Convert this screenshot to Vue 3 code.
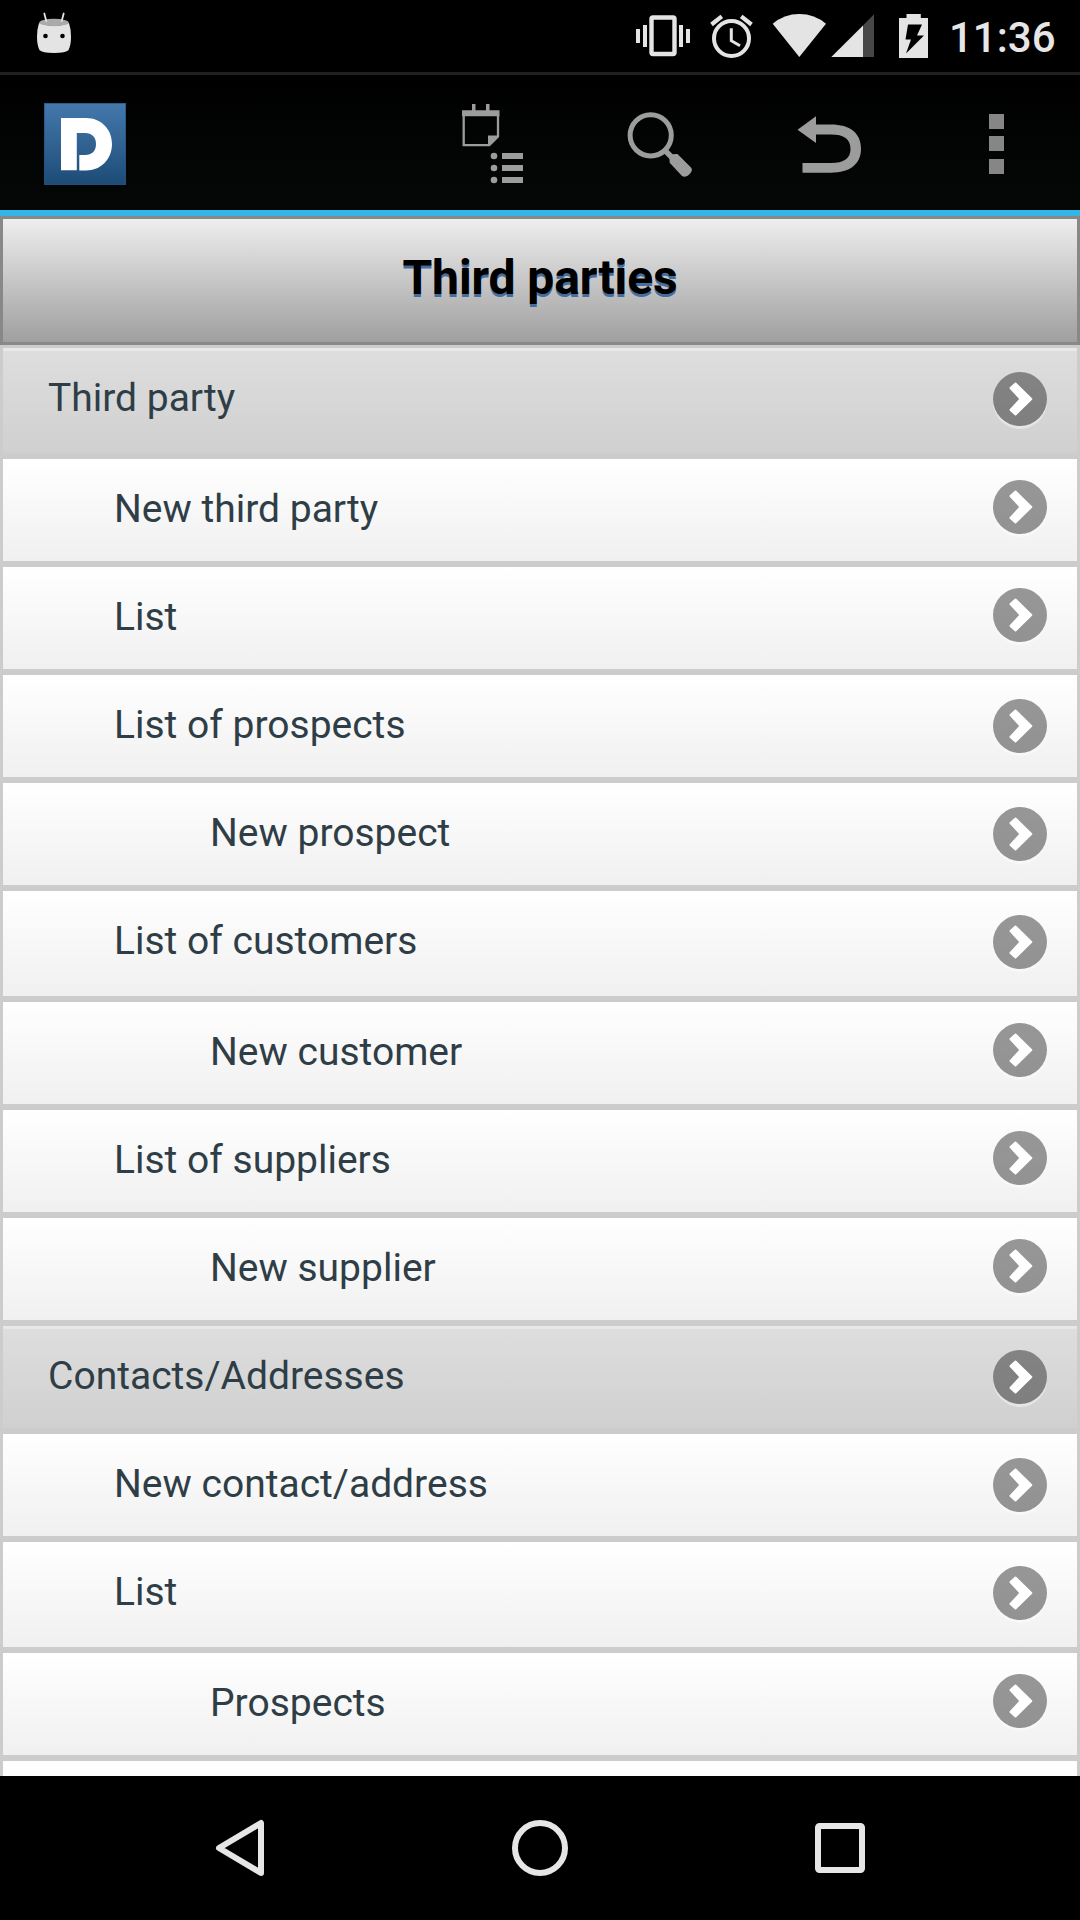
<script setup>
const rows = [
  { label: 'Third party', level: 0, height: 105, icon: 24 },
  { label: 'New third party', level: 1, height: 102, icon: 21 },
  { label: 'List', level: 1, height: 102, icon: 21 },
  { label: 'List of prospects', level: 1, height: 102, icon: 24 },
  { label: 'New prospect', level: 2, height: 102, icon: 24 },
  { label: 'List of customers', level: 1, height: 105, icon: 24 },
  { label: 'New customer', level: 2, height: 102, icon: 21 },
  { label: 'List of suppliers', level: 1, height: 102, icon: 21 },
  { label: 'New supplier', level: 2, height: 102, icon: 21 },
  { label: 'Contacts/Addresses', level: 0, height: 102, icon: 24 },
  { label: 'New contact/address', level: 1, height: 102, icon: 24 },
  { label: 'List', level: 1, height: 105, icon: 24 },
  { label: 'Prospects', level: 2, height: 102, icon: 21 },
  { label: '', level: 1, height: 102, icon: 24 },
]
</script>

<template>
  <div class="screen">
    <header class="status">
      <svg class="robot" width="36" height="42" viewBox="36 12 36 42">
        <path d="M39 23Q54 29 69 23Q71 29 71 37Q71 45 68.600 50Q66 53 54 53Q42 53 39.400 50Q37 45 37 37Q37 29 39 23Z" fill="#e4e4e4" />
        <ellipse cx="54" cy="22.500" rx="14.800" ry="3.700" fill="#aaa" />
        <path d="M44.300 13.500L46.300 21M63.700 13.500L61.700 21" stroke="#e4e4e4" stroke-width="1.800" stroke-linecap="round" />
        <circle cx="45.500" cy="36" r="2.300" fill="#000" />
        <circle cx="62.500" cy="36" r="2.300" fill="#000" />
      </svg>
      <svg class="status-icons" width="300" height="60" viewBox="630 0 300 60">
        <g fill="#e4e4e4">
          <path d="M636 29h4v14h-4zM643 25h4v22h-4zM679 25h4v22h-4zM686 29h4v14h-4z" />
          <rect x="651.500" y="17.500" width="23" height="36.500" rx="1.500" fill="none" stroke="#e4e4e4" stroke-width="4.400" />
          <circle cx="731.500" cy="38.500" r="17.500" fill="none" stroke="#e4e4e4" stroke-width="4" />
          <path d="M731.300 28.200v12.500l8.700 5" fill="none" stroke="#e4e4e4" stroke-width="3" />
          <path d="M711.500 24.500l10.300-8.200M751.500 24.500l-10.300-8.200" stroke="#e4e4e4" stroke-width="4.200" />
          <path d="M772.700 23.800Q784 14 799.300 14T826 23.800L799.300 57Z" />
          <path d="M831.300 57L863 25.500V57Z" />
          <path d="M863 25.500L874 14.300V57H863Z" fill="#474747" />
          <path d="M906.500 14h14.300v4H928v40h-29V18h7.500Z" />
        </g>
        <path d="M908 24.500H922L917 35.500H924L906 53.500L911 39.500H905.500Z" fill="#000" />
      </svg>
      <span class="clock">11:36</span>
    </header>

    <nav class="actionbar">
      <svg class="logo" width="82" height="82" viewBox="44 103 82 82">
        <defs>
          <linearGradient id="logoFill" x1="0" y1="0" x2="0" y2="1">
            <stop offset="0" stop-color="#4479ad" />
            <stop offset="1" stop-color="#1d4b76" />
          </linearGradient>
        </defs>
        <rect x="44" y="103" width="82" height="82" fill="url(#logoFill)" />
        <rect x="44.500" y="103.500" width="81" height="81" fill="none" stroke="#235081" stroke-opacity=".7" />
        <path d="M61 118H86C101 118 112 129 112 144C112 159 101 170.500 86 170.500H79.300V155H85C92 155 96 151 96 144C96 137 92 133 85 133H76.800V170.200H61Z" fill="#fff" />
      </svg>
      <div class="actions">
        <svg width="68" height="86" viewBox="460 100 68 86">
          <g fill="#9c9c9c">
            <path d="M472 104h3.500v7h-3.500zM486 104h3.500v7H486zM462 110.300h37.500v6H462z" />
            <path d="M463.700 115v30.200h25.600l8.700-8.700V115" fill="none" stroke="#9c9c9c" stroke-width="2.300" />
            <path d="M488 146v-10.500h11L489 146z" />
            <circle cx="494" cy="156" r="3.300" /><circle cx="494" cy="168" r="3.300" /><circle cx="494" cy="180" r="3.300" />
            <path d="M502 153h21v6h-21zM502 165h21v6h-21zM502 177h21v6h-21z" />
          </g>
        </svg>
        <svg width="70" height="70" viewBox="625 110 70 70">
          <circle cx="650.700" cy="135.300" r="20.600" fill="none" stroke="#9c9c9c" stroke-width="5" />
          <path d="M664 149.500l8 8" stroke="#9c9c9c" stroke-width="5.500" />
          <path d="M669.500 158.500Q669 155.500 671.500 155Q673 153.600 677.500 154L691 167.500Q693 170 690.500 173Q688 176.500 684 176.700L682 176L669.700 162.800Z" fill="#9c9c9c" />
        </svg>
        <svg width="68" height="62" viewBox="796 114 68 62">
          <path d="M797.500 129.800L816 116.300V124.600H831C850 124.600 861 133 861 149C861 164 850 172.700 831 172.700H802.500V163H831C844 163 850.500 158.500 850.500 149C850.500 139 844 134.600 831 134.600H816V143Z" fill="#9c9c9c" />
        </svg>
        <svg width="15" height="60" viewBox="0 0 15 60">
          <path d="M0 0h15v15H0zM0 22h15v15H0zM0 45h15v15H0z" fill="#868686" />
        </svg>
      </div>
    </nav>

    <main class="content">
      <h1 class="title">Third parties</h1>
      <ul class="list">
        <li
          v-for="(row, i) in rows"
          :key="i"
          class="row"
          :class="'level-' + row.level"
          :style="{ height: row.height + 'px' }"
        >
          <span class="label">{{ row.label }}</span>
          <span class="arrow" :style="{ marginTop: row.icon + 'px' }">
            <svg width="54" height="54" viewBox="-27 -27 54 54">
              <path d="M-4.500 -15.500L11.300 0L-4.500 15.500L-9.500 11L0.500 0L-9.500 -11Z" fill="#fff" stroke="#fff" stroke-width="2" stroke-linejoin="round" />
            </svg>
          </span>
        </li>
      </ul>
    </main>

    <footer class="navbar">
      <svg width="52" height="66" viewBox="214 1815 52 66">
        <path d="M261 1823V1873L219 1848Z" fill="none" stroke="#e6e6e6" stroke-width="6" stroke-linejoin="round" />
      </svg>
      <svg width="58" height="58" viewBox="0 0 58 58">
        <circle cx="29" cy="29" r="25" fill="none" stroke="#e6e6e6" stroke-width="6" />
      </svg>
      <svg width="50" height="50" viewBox="0 0 50 50">
        <rect x="3" y="3" width="44" height="44" rx="1.500" fill="none" stroke="#e6e6e6" stroke-width="6" />
      </svg>
    </footer>
  </div>
</template>

<style>
body {
  margin: 0;
  background: #000;
}
</style>

<style scoped>
.screen {
  width: 1080px;
  height: 1920px;
  display: flex;
  flex-direction: column;
  overflow: hidden;
  background: #000;
  font-family: Roboto, "Liberation Sans", sans-serif;
}
svg {
  display: block;
  flex: none;
}
.status {
  height: 72px;
  flex: none;
  display: flex;
  align-items: flex-start;
  border-bottom: 3px solid #202020;
}
.robot {
  margin: 12px 0 0 36px;
}
.status-icons {
  margin-left: 558px;
}
.clock {
  margin-left: 19px;
  color: #e6e6e6;
  font-size: 42px;
  font-weight: 500;
  line-height: 76px;
}
.actionbar {
  height: 135px;
  flex: none;
  display: flex;
  align-items: flex-start;
  background: linear-gradient(#000, #050707);
  border-bottom: 6px solid #33b5e5;
}
.logo {
  margin: 28px 0 0 44px;
}
.actions {
  display: flex;
  align-items: flex-start;
  margin-left: 334px;
}
.actions svg:nth-child(1) {
  margin-top: 25px;
}
.actions svg:nth-child(2) {
  margin: 35px 0 0 97px;
}
.actions svg:nth-child(3) {
  margin: 39px 0 0 101px;
}
.actions svg:nth-child(4) {
  margin: 39px 0 0 125px;
}
.content {
  height: 1560px;
  flex: none;
  overflow: hidden;
  background: #ccc;
}
.title {
  box-sizing: border-box;
  height: 129px;
  margin: 0;
  border: 3px solid #888;
  background: linear-gradient(#eee, #9f9f9f);
  color: #000;
  font-size: 48px;
  font-weight: 700;
  letter-spacing: -0.1px;
  line-height: 117px;
  text-align: center;
  text-shadow: 0 3px 0 #446e9e;
}
.list {
  display: flex;
  flex-direction: column;
  gap: 6px;
  margin: 0;
  padding: 3px 3px 0;
  list-style: none;
}
.row {
  flex: none;
  display: flex;
  justify-content: space-between;
  align-items: flex-start;
  box-sizing: border-box;
  padding-right: 30px;
  background: linear-gradient(#fff, #f0f0f0);
}
.label {
  color: #2f3e46;
  font-size: 39px;
  line-height: 100px;
  white-space: nowrap;
}
.level-0 {
  padding-left: 45px;
  background: linear-gradient(#dedede, #d0d0d0);
  box-shadow: inset 0 3px 0 #e8e8e8;
}
.level-1 {
  padding-left: 111px;
}
.level-2 {
  padding-left: 207px;
}
.arrow {
  width: 54px;
  height: 54px;
  border-radius: 50%;
  background: rgba(0, 0, 0, 0.4);
  box-shadow: 0 3px 0 rgba(255, 255, 255, 0.4);
}
.navbar {
  height: 144px;
  flex: none;
  display: flex;
  align-items: center;
  background: #000;
}
.navbar svg:nth-child(1) {
  margin-left: 214px;
}
.navbar svg:nth-child(2) {
  margin-left: 245px;
}
.navbar svg:nth-child(3) {
  margin-left: 246px;
}
</style>
